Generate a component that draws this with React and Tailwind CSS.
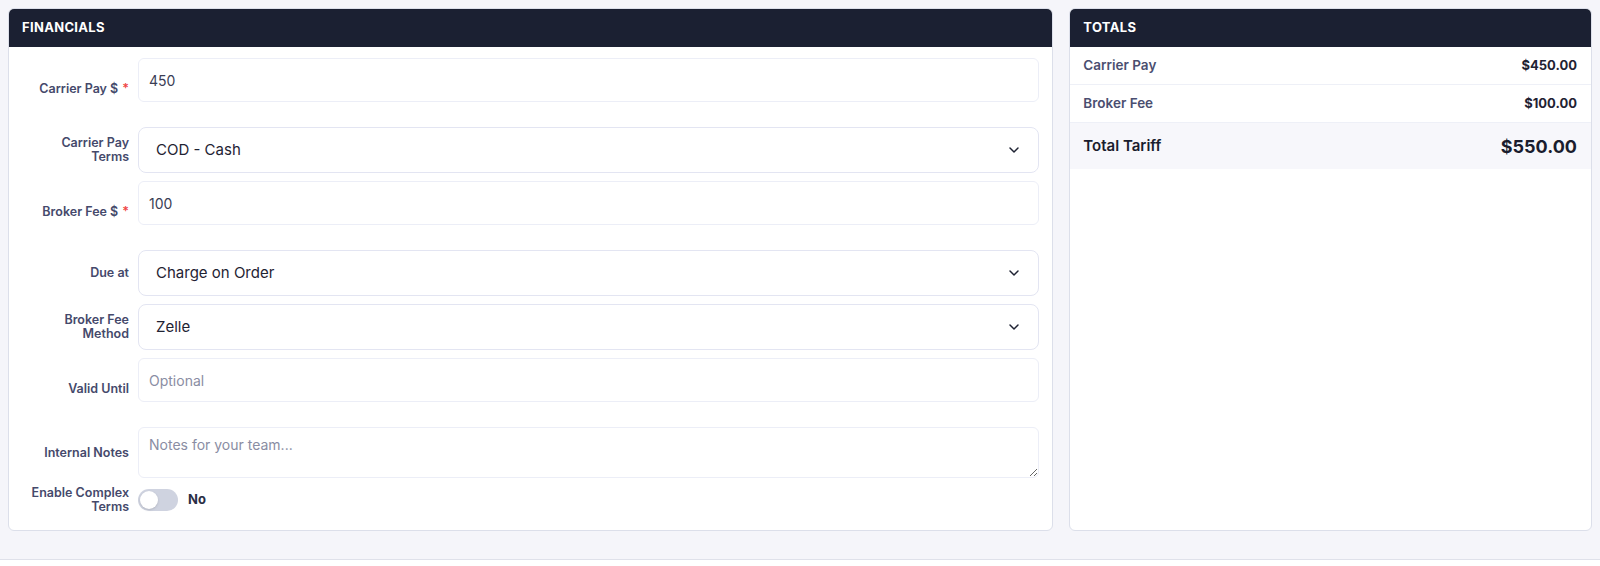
import React, { useState } from "react";
import { ChevronDown } from "lucide-react";

const font = { fontFamily: "Inter, 'Open Sans', sans-serif" };

const Label = ({ children, required }) => (
  <label className="w-[107px] shrink-0 text-right text-[12.5px] leading-[14px] font-semibold text-[#45496b]">
    {children}
    {required && <span className="ml-1 text-[#ef4444]">*</span>}
  </label>
);

const TextRow = ({ label, required, value, placeholder }) => (
  <div className="flex items-center gap-[9px]">
    <Label required={required}>{label}</Label>
    <div className="flex-1 pb-[17px]">
      <input
        type="text"
        defaultValue={value}
        placeholder={placeholder}
        className="h-11 w-full rounded-md border border-[#eceef7] bg-white px-[10px] text-[14px] text-[#3a3d55] placeholder-[#8a8da3] outline-none"
      />
    </div>
  </div>
);

const SelectRow = ({ label, value }) => (
  <div className="flex items-center gap-[9px]">
    <Label>{label}</Label>
    <div className="flex h-[46px] flex-1 items-center justify-between rounded-lg border border-[#e3e5f2] bg-white pl-[17px] pr-4">
      <span className="text-[15px] text-[#1f2333]">{value}</span>
      <ChevronDown size={16} strokeWidth={2.2} className="text-[#1f2333]" />
    </div>
  </div>
);

const App = () => {
  const [complex, setComplex] = useState(false);

  const totals = [
    { label: "Carrier Pay", amount: "$450.00" },
    { label: "Broker Fee", amount: "$100.00" },
  ];

  return (
    <div style={font} className="h-[560px] border-b border-[#dfe1ea] bg-[#f5f5fa] p-2">
      <div className="grid grid-cols-[2fr_1fr] gap-4">
        {/* Financials */}
        <div className="overflow-hidden rounded-md border border-[#dcdfea] bg-white">
          <div className="flex h-[38px] items-center bg-[#1b2032] px-[13px] text-[13px] font-bold tracking-wide text-white">
            FINANCIALS
          </div>
          <div className="flex flex-col gap-2 px-[13px] pt-[11px] pb-4">
            <TextRow label="Carrier Pay $" required value="450" />
            <SelectRow label={<>Carrier Pay<br />Terms</>} value="COD - Cash" />
            <TextRow label="Broker Fee $" required value="100" />
            <SelectRow label="Due at" value="Charge on Order" />
            <SelectRow label={<>Broker Fee<br />Method</>} value="Zelle" />
            <TextRow label="Valid Until" placeholder="Optional" />
            <div className="flex items-center gap-[9px]">
              <Label>Internal Notes</Label>
              <textarea
                placeholder="Notes for your team..."
                className="h-[51px] flex-1 rounded-md border border-[#eceef7] bg-white px-[10px] py-[6px] text-[14px] text-[#3a3d55] placeholder-[#8a8da3] outline-none"
              />
            </div>
            <div className="flex items-center gap-[9px]">
              <Label>Enable Complex<br />Terms</Label>
              <button
                onClick={() => setComplex(!complex)}
                className={`relative h-[22px] w-10 rounded-full ${complex ? "bg-[#1b2032]" : "bg-[#cfd3e0]"}`}
              >
                <span
                  className={`absolute top-[2px] h-[18px] w-[18px] rounded-full bg-white shadow ${complex ? "left-5" : "left-[2px]"}`}
                />
              </button>
              <span className="ml-[1px] text-[13px] font-bold text-[#2a2e45]">{complex ? "Yes" : "No"}</span>
            </div>
          </div>
        </div>

        {/* Totals */}
        <div className="overflow-hidden rounded-md border border-[#dcdfea] bg-white">
          <div className="flex h-[38px] items-center bg-[#1b2032] px-[13px] text-[13px] font-bold tracking-wide text-white">
            TOTALS
          </div>
          {totals.map((t) => (
            <div
              key={t.label}
              className="flex h-[38px] items-center justify-between border-b border-[#eef0f7] pl-[13px] pr-[14px]"
            >
              <span className="text-[13.5px] font-semibold text-[#4a4e70]">{t.label}</span>
              <span className="text-[13px] font-bold text-[#1f2333]">{t.amount}</span>
            </div>
          ))}
          <div className="flex h-[46px] items-center justify-between bg-[#f7f7fb] pl-[13px] pr-[14px]">
            <span className="text-[15px] font-semibold text-[#1a1d2e]">Total Tariff</span>
            <span className="text-[18px] font-bold text-[#1a1d2e]">$550.00</span>
          </div>
        </div>
      </div>
    </div>
  );
};

export default App;
